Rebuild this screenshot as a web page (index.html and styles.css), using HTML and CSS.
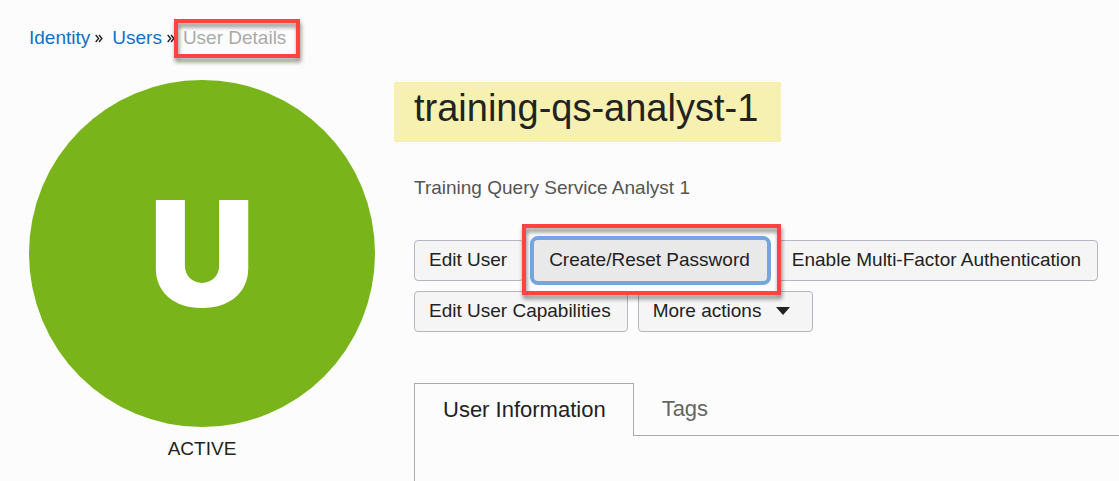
FILE: index.html
```html
<!DOCTYPE html>
<html lang="en">
<head>
<meta charset="utf-8">
<meta name="viewport" content="width=device-width, initial-scale=1">
<title>User Details</title>
<link rel="stylesheet" href="styles.css">
</head>
<body>
<nav class="breadcrumb" aria-label="Breadcrumb">
  <a href="#">Identity</a>
  <svg class="sep" viewBox="0 0 8 9" aria-hidden="true"><path d="M.7 1 3.6 4.5.7 8M4 1l2.9 3.5L4 8"/></svg>
  <a class="crumb-next" href="#">Users</a>
  <svg class="sep" viewBox="0 0 8 9" aria-hidden="true"><path d="M.7 1 3.6 4.5.7 8M4 1l2.9 3.5L4 8"/></svg>
  <span class="current callout" aria-current="page">User Details</span>
</nav>
<main class="details">
  <aside class="profile">
    <div class="avatar">U</div>
    <p class="status">ACTIVE</p>
  </aside>
  <section class="content">
    <h1 class="title">training-qs-analyst-1</h1>
    <p class="description">Training Query Service Analyst 1</p>
    <div class="actions">
      <button class="btn" type="button">Edit User</button>
      <span class="callout callout-action"><button class="btn focused" type="button">Create/Reset Password</button></span>
      <button class="btn" type="button">Enable Multi-Factor Authentication</button>
      <button class="btn" type="button">Edit User Capabilities</button>
      <button class="btn menu" type="button">More actions
        <svg class="caret" viewBox="0 0 14 8" aria-hidden="true"><path d="M0 0h14L7 8z"/></svg>
      </button>
    </div>
    <div class="tabs" role="tablist">
      <button class="tab active" type="button" role="tab" aria-selected="true">User Information</button>
      <button class="tab" type="button" role="tab" aria-selected="false">Tags</button>
    </div>
    <div class="panel" role="tabpanel"></div>
  </section>
</main>
</body>
</html>
```
FILE: styles.css
```css
* { box-sizing: border-box; }

body {
  margin: 0;
  min-height: 100vh;
  display: flex;
  flex-direction: column;
  background: #fcfcfc;
  color: #222;
  font: 19px/24px "Liberation Sans", Arial, sans-serif;
}

h1, p { margin: 0; }
button { font: inherit; color: inherit; }

.breadcrumb {
  display: flex;
  align-items: center;
  padding: 26px 29px 30px;
}
.breadcrumb a { color: #1070ca; text-decoration: none; }
.breadcrumb .crumb-next { margin-left: 9px; }
.sep {
  width: 8px;
  height: 9px;
  margin-left: 5px;
  fill: none;
  stroke: #222;
  stroke-width: 1.4;
}
.current { margin-left: 8px; color: #aaa; }

.callout { position: relative; }
.callout::after {
  content: "";
  position: absolute;
  inset: -7px -14px -8px -9px;
  border: 4px solid #ff4242;
  filter: drop-shadow(1px 4px 2px rgba(0, 0, 0, .45));
  pointer-events: none;
}
.callout-action { display: flex; z-index: 1; }
.callout-action::after { inset: -16px -14px -14px -12px; }

.details {
  flex: 1;
  display: grid;
  grid-template-columns: 346px 1fr;
  gap: 39px;
  padding-left: 29px;
}

.avatar {
  display: flex;
  align-items: center;
  justify-content: center;
  height: 347px;
  border-radius: 50%;
  background: #78b41a;
  color: #fff;
  font: 900 147px/1 Inter, "Open Sans", sans-serif;
}
.status { padding-top: 10px; text-align: center; }

.content {
  display: flex;
  flex-direction: column;
  min-width: 0;
}
.title {
  align-self: flex-start;
  margin: 2px 0 0 -20px;
  padding: 0 23px 8px 20px;
  background: #f7f1b1;
  font-size: 38px;
  font-weight: 400;
  line-height: 52px;
}
.description { padding-top: 34px; color: #555; }

.actions {
  display: flex;
  flex-wrap: wrap;
  gap: 10px;
  padding-top: 40px;
}
.btn {
  height: 41px;
  padding: 0 16px 2px 14px;
  border: 1px solid #b3b8c0;
  border-radius: 4px;
  background: #f5f5f5;
  white-space: nowrap;
}
.focused {
  border-color: #e9e9e9;
  background: #e9e9e9;
  outline: 4px solid #73a5e0;
}
.menu {
  display: flex;
  align-items: center;
  gap: 15px;
  padding-right: 22px;
}
.caret { width: 14px; height: 8px; fill: #222; }

.tabs {
  display: flex;
  padding-top: 51px;
}
.tabs::after {
  content: "";
  flex: 1;
  border-bottom: 1px solid #aaa;
}
.tab {
  height: 53px;
  padding: 0 28px 1px;
  border: 0;
  border-bottom: 1px solid #aaa;
  background: none;
  color: #666;
  font-size: 22px;
}
.tab.active {
  padding: 0 27px 0 28px;
  border: 1px solid #aaa;
  border-bottom: 0;
  color: #222;
}
.panel {
  flex: 1;
  border-left: 1px solid #aaa;
}
```
